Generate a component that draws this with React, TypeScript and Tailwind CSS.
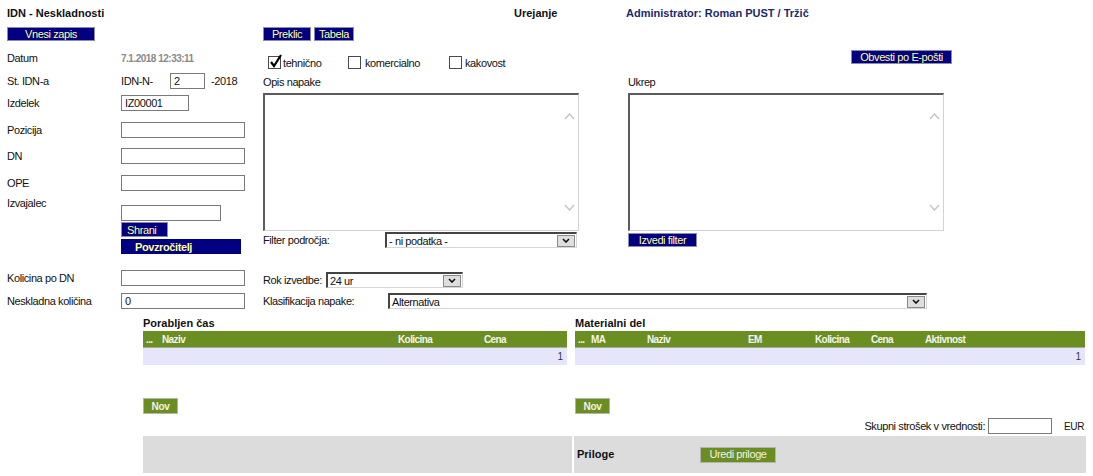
import React from "react";

function NavyBtn({ children, className = "" }: { children: React.ReactNode; className?: string }) {
  return (
    <div
      className={`h-[14px] bg-[#000080] border border-[#8c8ca8] text-[#ffff99] text-[11px] tracking-[-0.4px] leading-[12px] flex items-center justify-center ${className}`}
    >
      {children}
    </div>
  );
}

function GreenBtn({ children, className = "" }: { children: React.ReactNode; className?: string }) {
  return (
    <div
      className={`h-[16px] bg-[#6b8e23] border border-[#b4b4b4] text-[#f2f2e6] flex items-center justify-center ${className}`}
    >
      {children}
    </div>
  );
}

function Input({ className = "", value = "" }: { className?: string; value?: string }) {
  return (
    <div
      className={`h-[16px] bg-white border border-[#7a7a7a] flex items-center pl-[3px] text-[11px] tracking-[-0.4px] ${className}`}
    >
      {value}
    </div>
  );
}

function Chevron({ up = false, color = "#c4c4c4", w = 11, h = 7, sw = 1.4 }: { up?: boolean; color?: string; w?: number; h?: number; sw?: number }) {
  return (
    <svg width={w} height={h} viewBox={`0 0 ${w} ${h}`} className="block">
      {up ? (
        <polyline points={`1,${h - 1} ${w / 2},1 ${w - 1},${h - 1}`} fill="none" stroke={color} strokeWidth={sw} />
      ) : (
        <polyline points={`1,1 ${w / 2},${h - 1} ${w - 1},1`} fill="none" stroke={color} strokeWidth={sw} />
      )}
    </svg>
  );
}

function TextArea({ className = "" }: { className?: string }) {
  return (
    <div
      className={`relative h-[138px] w-[316px] bg-white border-t-2 border-l-2 border-r border-b border-t-[#5c5c5c] border-l-[#5c5c5c] border-r-[#d2d2d2] border-b-[#d2d2d2] ${className}`}
    >
      <div className="absolute right-[3px] top-[18px]">
        <Chevron up />
      </div>
      <div className="absolute right-[3px] bottom-[19px]">
        <Chevron />
      </div>
    </div>
  );
}

function Select({ value, className = "" }: { value: string; className?: string }) {
  return (
    <div
      className={`h-[16px] bg-white flex items-center border-t-2 border-l-2 border-r border-b border-t-[#444] border-l-[#444] border-r-[#d6d6d6] border-b-[#d6d6d6] ${className}`}
    >
      <span className="flex-1 pl-[2px] text-[11px] tracking-[-0.4px] leading-[12px]">{value}</span>
      <div className="w-[18px] h-[12px] mr-[1px] bg-[#dedede] border border-[#8a8a8a] flex items-center justify-center">
        <Chevron color="#111" w={8} h={5} sw={1.6} />
      </div>
    </div>
  );
}

function Check({ checked = false }: { checked?: boolean }) {
  return (
    <div className="relative w-[13px] h-[13px] bg-white border border-[#4a4a4a] shrink-0">
      {checked && (
        <svg width="14" height="15" viewBox="0 0 14 15" className="absolute left-[0px] top-[-3px]">
          <polyline points="2,8 5,12 12,1" fill="none" stroke="#000" strokeWidth="2.2" />
        </svg>
      )}
    </div>
  );
}

export default function App() {
  return (
    <div className="w-[1093px] h-[476px] bg-white overflow-hidden font-['Liberation_Sans',Arial,sans-serif] text-[11px] text-[#111]">
      {/* header */}
      <div className="flex h-[14px] mt-[6px] items-center font-bold leading-[14px]">
        <div className="w-[514px] pl-[7px]">IDN - Neskladnosti</div>
        <div className="w-[112px]">Urejanje</div>
        <div className="text-[#1b2a6b]">Administrator: Roman PUST / Tržič</div>
      </div>

      {/* form */}
      <div className="flex mt-[6px] pl-[7px] tracking-[-0.4px]">
        {/* left column */}
        <div className="w-[256px] flex flex-col">
          <NavyBtn className="mt-[1px] w-[88px]">Vnesi zapis</NavyBtn>

          <div className="mt-[9px] h-[16px] flex items-center">
            <div className="w-[114px]">Datum</div>
            <div className="text-[10px] font-bold text-[#8a8a8a] tracking-[-0.5px]">7.1.2018 12:33:11</div>
          </div>

          <div className="mt-[7px] h-[16px] flex items-center">
            <div className="w-[114px]">St. IDN-a</div>
            <div className="w-[49px]">IDN-N-</div>
            <Input className="w-[35px]" value="2" />
            <div className="ml-[6px]">-2018</div>
          </div>

          <div className="mt-[6px] h-[16px] flex items-center">
            <div className="w-[114px]">Izdelek</div>
            <Input className="w-[68px]" value="IZ00001" />
          </div>

          <div className="mt-[11px] h-[16px] flex items-center">
            <div className="w-[114px]">Pozicija</div>
            <Input className="w-[124px]" />
          </div>

          <div className="mt-[10px] h-[16px] flex items-center">
            <div className="w-[114px]">DN</div>
            <Input className="w-[124px]" />
          </div>

          <div className="mt-[11px] h-[16px] flex items-center">
            <div className="w-[114px]">OPE</div>
            <Input className="w-[124px]" />
          </div>

          <div className="mt-[6px] flex">
            <div className="w-[114px] leading-[12px]">Izvajalec</div>
            <div className="flex flex-col">
              <Input className="mt-[8px] w-[100px]" />
              <NavyBtn className="mt-[1px] h-[15px] w-[47px] justify-start pl-[5px]">Shrani</NavyBtn>
              <div className="mt-[2px] h-[15px] w-[120px] bg-[#000080] text-[#ffff99] font-bold flex items-center pl-[14px] leading-[12px]">
                Povzročitelj
              </div>
            </div>
          </div>

          <div className="mt-[16px] h-[16px] flex items-center">
            <div className="w-[114px]">Kolicina po DN</div>
            <Input className="w-[124px]" />
          </div>

          <div className="mt-[7px] h-[16px] flex items-center">
            <div className="w-[114px]">Neskladna količina</div>
            <Input className="w-[124px]" value="0" />
          </div>
        </div>

        {/* right side */}
        <div className="flex-1 flex flex-col">
          <div className="mt-[1px] flex gap-[3px]">
            <NavyBtn className="w-[48px]">Preklic</NavyBtn>
            <NavyBtn className="w-[40px]">Tabela</NavyBtn>
          </div>

          <div className="mt-[9px] h-[16px] flex items-start">
            <div className="w-[588px] flex items-center mt-[3px] pl-[5px]">
              <div className="w-[80px] flex items-center gap-[2px]">
                <Check checked />
                <span className="mt-[2px]">tehnično</span>
              </div>
              <div className="w-[101px] flex items-center gap-[4px]">
                <Check />
                <span className="mt-[2px]">komercialno</span>
              </div>
              <div className="flex items-center gap-[3px]">
                <Check />
                <span className="mt-[2px]">kakovost</span>
              </div>
            </div>
            <NavyBtn className="w-[101px]">Obvesti po E-pošti</NavyBtn>
          </div>

          <div className="mt-[10px] h-[12px] flex leading-[12px]">
            <div className="w-[365px]">Opis napake</div>
            <div>Ukrep</div>
          </div>

          <div className="mt-[5px] flex">
            <TextArea />
            <TextArea className="ml-[49px]" />
          </div>

          <div className="mt-[1px] h-[16px] flex items-center">
            <div className="w-[122px]">Filter področja:</div>
            <Select className="w-[192px]" value="- ni podatka -" />
            <NavyBtn className="ml-[51px] w-[69px]">Izvedi filter</NavyBtn>
          </div>

          <div className="mt-[24px] h-[16px] flex items-center">
            <div className="w-[63px]">Rok izvedbe:</div>
            <Select className="w-[137px]" value="24 ur" />
          </div>

          <div className="mt-[5px] h-[16px] flex items-center">
            <div className="w-[125px]">Klasifikacija napake:</div>
            <Select className="w-[539px]" value="Alternativa" />
          </div>
        </div>
      </div>

      {/* tables */}
      <div className="ml-[143px] mt-[7px] grid grid-cols-[424px_510px] gap-x-[8px]">
        <div className="flex flex-col">
          <div className="h-[14px] font-bold leading-[14px]">Porabljen čas</div>
          <div className="mt-[1px] h-[17px] bg-[#6b8e23] border-b border-b-[#a4ab98] flex items-center pl-[3px] text-[10px] font-bold text-[#f4f4ec] tracking-[-0.6px]">
            <div className="w-[16px]">...</div>
            <div className="w-[236px]">Naziv</div>
            <div className="w-[86px]">Kolicina</div>
            <div>Cena</div>
          </div>
          <div className="h-[17px] bg-[#e6e6fa] flex items-center justify-end pr-[4px] text-[10px] text-[#333355]">1</div>
          <GreenBtn className="mt-[33px] w-[35px] text-[10px] font-bold tracking-[-0.3px]">Nov</GreenBtn>
        </div>
        <div className="flex flex-col">
          <div className="h-[14px] font-bold leading-[14px]">Materialni del</div>
          <div className="mt-[1px] h-[17px] bg-[#6b8e23] border-b border-b-[#a4ab98] flex items-center pl-[3px] text-[10px] font-bold text-[#f4f4ec] tracking-[-0.6px]">
            <div className="w-[13px]">...</div>
            <div className="w-[56px]">MA</div>
            <div className="w-[101px]">Naziv</div>
            <div className="w-[67px]">EM</div>
            <div className="w-[56px]">Kolicina</div>
            <div className="w-[54px]">Cena</div>
            <div>Aktivnost</div>
          </div>
          <div className="h-[17px] bg-[#e6e6fa] flex items-center justify-end pr-[4px] text-[10px] text-[#333355]">1</div>
          <GreenBtn className="mt-[33px] w-[35px] text-[10px] font-bold tracking-[-0.3px]">Nov</GreenBtn>
          <div className="mt-[4px] h-[16px] flex items-center justify-end pr-[1px] tracking-[-0.4px]">
            <span>Skupni strošek v vrednosti:</span>
            <Input className="ml-[3px] w-[64px]" />
            <span className="ml-[12px] text-[10px]">EUR</span>
          </div>
        </div>
      </div>

      {/* attachments band */}
      <div className="ml-[143px] mt-[2px] h-[37px] flex gap-[2px]">
        <div className="w-[429px] bg-[#dcdcdc]" />
        <div className="w-[512px] bg-[#dcdcdc] flex items-center">
          <div className="w-[126px] pl-[3px] font-bold">Priloge</div>
          <GreenBtn className="w-[76px] h-[15px] tracking-[-0.4px]">Uredi priloge</GreenBtn>
        </div>
      </div>
    </div>
  );
}
